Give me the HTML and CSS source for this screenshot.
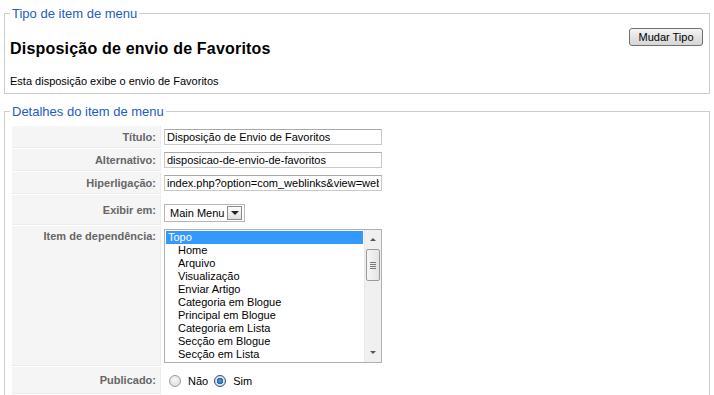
FILE: index.html
```html
<!DOCTYPE html>
<html lang="pt-br">

<head>
  <meta charset="utf-8">
  <title>Editar item de menu</title>
  <link rel="stylesheet" href="styles.css">
</head>

<body>
  <fieldset class="caixa">
    <legend>Tipo de item de menu</legend>
    <div class="tipo-topo">
      <h2>Disposição de envio de Favoritos</h2>
      <button type="button" class="botao">Mudar Tipo</button>
    </div>
    <p class="descricao">Esta disposição exibe o envio de Favoritos</p>
  </fieldset>

  <fieldset class="caixa">
    <legend>Detalhes do item de menu</legend>
    <div class="tabela">
      <label class="chave" for="titulo">Título:</label>
      <div class="valor"><input id="titulo" class="campo" type="text" value="Disposição de Envio de Favoritos"></div>

      <label class="chave" for="alias">Alternativo:</label>
      <div class="valor"><input id="alias" class="campo" type="text" value="disposicao-de-envio-de-favoritos"></div>

      <label class="chave" for="link">Hiperligação:</label>
      <div class="valor"><input id="link" class="campo" type="text" value="index.php?option=com_weblinks&amp;view=weblink&amp;layout=form"></div>

      <div class="chave">Exibir em:</div>
      <div class="valor valor-menu">
        <div class="seletor">
          <span class="seletor-texto">Main Menu</span>
          <span class="seletor-seta"></span>
        </div>
      </div>

      <div class="chave chave-topo">Item de dependência:</div>
      <div class="valor valor-topo">
        <div class="lista">
          <ul class="itens">
            <li class="selecionado">Topo</li>
            <li class="filho">Home</li>
            <li class="filho">Arquivo</li>
            <li class="filho">Visualização</li>
            <li class="filho">Enviar Artigo</li>
            <li class="filho">Categoria em Blogue</li>
            <li class="filho">Principal em Blogue</li>
            <li class="filho">Categoria em Lista</li>
            <li class="filho">Secção em Blogue</li>
            <li class="filho">Secção em Lista</li>
          </ul>
          <div class="rolagem">
            <span class="seta-cima"></span>
            <span class="polegar"><i></i><i></i><i></i><i></i></span>
            <span class="seta-baixo"></span>
          </div>
        </div>
      </div>

      <div class="chave">Publicado:</div>
      <div class="valor">
        <label class="opcao"><input type="radio" name="publicado" class="radio"> Não</label>
        <label class="opcao"><input type="radio" name="publicado" class="radio" checked> Sim</label>
      </div>
    </div>
  </fieldset>
</body>

</html>
```

FILE: styles.css
```css
body {
  margin: 0;
  padding: 6px 4px 0;
  font-family: "Liberation Sans", Arial, sans-serif;
  font-size: 11px;
  color: #000;
  background-color: #fff;
}

.caixa {
  margin: 0 0 10px;
  padding: 0 6px 5px 5px;
  border: 1px solid #cccccc;
  min-width: 0;
}

legend {
  color: #1c5cbf;
  font-size: 13px;
  line-height: 15px;
  padding: 0 2px;
}

.tipo-topo {
  display: flex;
  justify-content: space-between;
  align-items: flex-start;
  padding-top: 7px;
}

h2 {
  margin: 11px 0 0;
  font-size: 16px;
  line-height: 19px;
  font-weight: bold;
  letter-spacing: 0.2px;
}

.botao {
  width: 74px;
  height: 18px;
  padding: 0;
  font-family: inherit;
  font-size: 11px;
  color: #000;
  border: 1px solid #707070;
  border-radius: 3px;
  background: linear-gradient(#f6f6f6, #e3e3e3 50%, #d6d6d6);
}

.descricao {
  margin: 17px 0 0;
  line-height: 13px;
}

/* tabela de detalhes */
.tabela {
  display: grid;
  grid-template-columns: 149px 1fr;
  grid-template-rows: 22px 22px 22px 30px 140px 27px;
  row-gap: 1px;
  margin: 7px 0 0 2px;
}

.chave {
  display: flex;
  align-items: center;
  justify-content: flex-end;
  padding-right: 4px;
  background-color: #f5f5f5;
  border-right: 1px solid #ececec;
  border-bottom: 1px solid #ececec;
  color: #666;
  font-weight: bold;
  font-size: 11px;
}

.chave-topo {
  align-items: flex-start;
  padding-top: 4px;
}

.valor {
  display: flex;
  align-items: center;
  padding-left: 3px;
}

.valor-menu {
  align-items: flex-start;
  padding-top: 9px;
}

.valor-topo {
  align-items: flex-start;
  padding-top: 3px;
}

.campo {
  box-sizing: border-box;
  width: 218px;
  height: 16px;
  margin: 0;
  padding: 0 2px;
  font-family: inherit;
  font-size: 11px;
  color: #000;
  border: 1px solid #c9c9c9;
  border-top-color: #a9a9a9;
  outline: none;
}

.seletor {
  display: flex;
  align-items: center;
  box-sizing: border-box;
  width: 81px;
  height: 18px;
  border: 1px solid #b8b8b8;
}

.seletor-texto {
  flex: 1;
  padding-left: 5px;
  font-size: 11px;
}

.seletor-seta {
  position: relative;
  width: 13px;
  height: 12px;
  margin-right: 2px;
  border: 1px solid #8a8a8a;
  background: linear-gradient(#fdfdfd, #dedede);
}

.seletor-seta::after {
  content: "";
  position: absolute;
  left: 3px;
  top: 4px;
  border-left: 4px solid transparent;
  border-right: 4px solid transparent;
  border-top: 4px solid #222;
}

.lista {
  display: flex;
  box-sizing: border-box;
  width: 218px;
  height: 134px;
  border: 1px solid #b0b0b0;
  overflow: hidden;
}

.itens {
  flex: 1;
  list-style: none;
  margin: 0;
  padding: 1px 1px 0 1px;
  overflow: hidden;
}

.itens li {
  height: 13px;
  line-height: 13px;
  padding-left: 2px;
  white-space: nowrap;
}

.itens .filho {
  padding-left: 12px;
}

.itens .selecionado {
  background-color: #3399ff;
  color: #fff;
}

.rolagem {
  position: relative;
  width: 16px;
  background-color: #f0f0f0;
  border-left: 1px solid #e8e8e8;
}

.seta-cima,
.seta-baixo {
  position: absolute;
  left: 5px;
  border-left: 3px solid transparent;
  border-right: 3px solid transparent;
}

.seta-cima {
  top: 8px;
  border-bottom: 3px solid #555;
}

.seta-baixo {
  bottom: 8px;
  border-top: 3px solid #555;
}

.polegar {
  position: absolute;
  left: 1px;
  top: 19px;
  box-sizing: border-box;
  width: 14px;
  height: 32px;
  border: 1px solid #9a9a9a;
  border-radius: 2px;
  background: linear-gradient(to right, #f6f6f6, #e4e4e4);
  display: flex;
  flex-direction: column;
  align-items: center;
  justify-content: center;
  gap: 1px;
}

.polegar i {
  display: block;
  width: 6px;
  height: 1px;
  background-color: #7a7a7a;
}

.opcao {
  display: inline-flex;
  align-items: center;
  margin-left: 5px;
  margin-right: 1px;
  font-size: 11px;
}

.radio {
  appearance: none;
  -webkit-appearance: none;
  box-sizing: border-box;
  width: 12px;
  height: 12px;
  margin: 0 7px 0 0;
  border: 1px solid #9c9c9c;
  border-radius: 50%;
  background: radial-gradient(circle at 50% 40%, #f7f7f7, #d9d9d9);
}

.radio:checked {
  border-color: #33507a;
  background: radial-gradient(circle, #5aa3e8 0, #1f5fb0 3px, #e6e6e6 3.5px, #cfcfcf 100%);
}
```
